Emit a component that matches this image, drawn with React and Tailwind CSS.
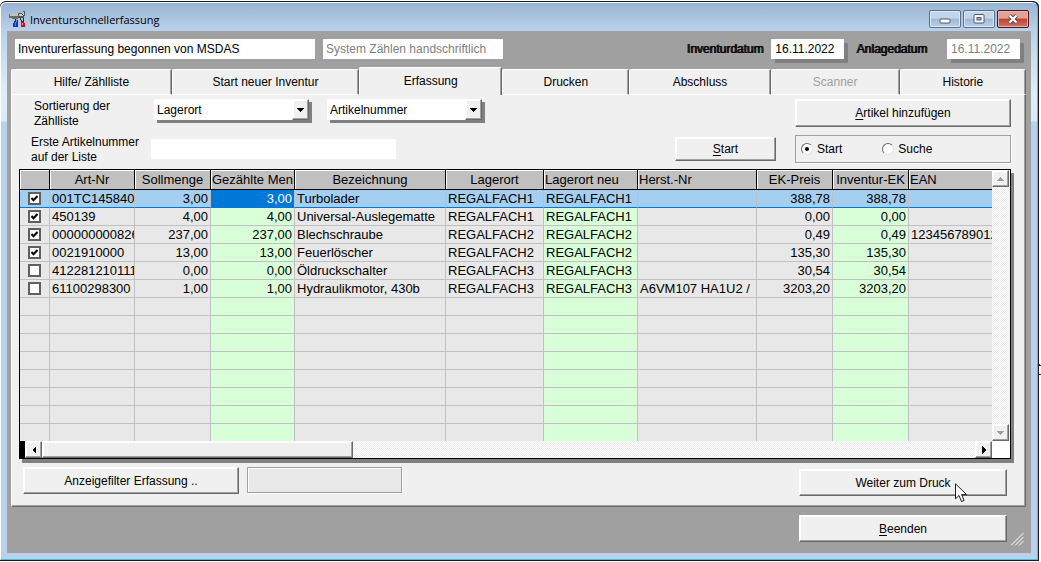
import React, { useState } from 'react';

const TABS = [
  { id: 'hilfe', label: 'Hilfe/ Zählliste', grow: 'flex-[161]' },
  { id: 'neu', label: 'Start neuer Inventur', grow: 'flex-[188]' },
  { id: 'erfassung', label: 'Erfassung', grow: 'flex-[143]' },
  { id: 'drucken', label: 'Drucken', grow: 'flex-[127]' },
  { id: 'abschluss', label: 'Abschluss', grow: 'flex-[141]' },
  { id: 'scanner', label: 'Scanner', grow: 'flex-[129]', disabled: true },
  { id: 'historie', label: 'Historie', grow: 'flex-[126]' },
];

const COLUMNS = [
  { key: 'artNr', label: 'Art-Nr', width: 'w-[85px]' },
  { key: 'soll', label: 'Sollmenge', width: 'w-[76px]', right: true },
  { key: 'menge', label: 'Gezählte Men', width: 'w-[84px]', right: true, edit: true, headLeft: true },
  { key: 'name', label: 'Bezeichnung', width: 'w-[151px]' },
  { key: 'lager', label: 'Lagerort', width: 'w-[98px]' },
  { key: 'lagerNeu', label: 'Lagerort neu', width: 'w-[94px]', edit: true, headLeft: true },
  { key: 'herst', label: 'Herst.-Nr', width: 'w-[119px]', headLeft: true },
  { key: 'ek', label: 'EK-Preis', width: 'w-[76px]', right: true },
  { key: 'invEk', label: 'Inventur-EK', width: 'w-[76px]', right: true, edit: true },
  { key: 'ean', label: 'EAN', width: '', headLeft: true },
];

const ROWS = [
  { counted: true, artNr: '001TC1458400', soll: '3,00', menge: '3,00', name: 'Turbolader', lager: 'REGALFACH1', lagerNeu: 'REGALFACH1', ek: '388,78', invEk: '388,78' },
  { counted: true, artNr: '450139', soll: '4,00', menge: '4,00', name: 'Universal-Auslegematte', lager: 'REGALFACH1', lagerNeu: 'REGALFACH1', ek: '0,00', invEk: '0,00' },
  { counted: true, artNr: '000000000826', soll: '237,00', menge: '237,00', name: 'Blechschraube', lager: 'REGALFACH2', lagerNeu: 'REGALFACH2', ek: '0,49', invEk: '0,49', ean: '123456789012' },
  { counted: true, artNr: '0021910000', soll: '13,00', menge: '13,00', name: 'Feuerlöscher', lager: 'REGALFACH2', lagerNeu: 'REGALFACH2', ek: '135,30', invEk: '135,30' },
  { counted: false, artNr: '412281210111', soll: '0,00', menge: '0,00', name: 'Öldruckschalter', lager: 'REGALFACH3', lagerNeu: 'REGALFACH3', ek: '30,54', invEk: '30,54' },
  { counted: false, artNr: '61100298300', soll: '1,00', menge: '1,00', name: 'Hydraulikmotor, 430b', lager: 'REGALFACH3', lagerNeu: 'REGALFACH3', herst: 'A6VM107 HA1U2 /', ek: '3203,20', invEk: '3203,20' },
];

const EMPTY_ROWS = 8;

const RAISED = 'border border-t-white border-l-white border-r-[#696969] border-b-[#696969] bg-[#f0f0f0] shadow-[inset_-1px_-1px_0_#a0a0a0,inset_1px_1px_0_#fff]';

const DITHER = 'bg-[repeating-conic-gradient(#fff_0_25%,#ececec_0_50%)] bg-[length:2px_2px]';

const Arrow = ({ points, className = 'text-black' }) => (
  <svg className={className} width="8" height="8" viewBox="0 0 8 8" shapeRendering="crispEdges" aria-hidden="true">
    <polygon points={points} fill="currentColor" />
  </svg>
);

// Hammer and pliers with a blue and a red grip
const AppIcon = () => (
  <svg className="mt-1 shrink-0" width="17" height="16" viewBox="0 0 17 16" shapeRendering="crispEdges" aria-hidden="true">
    <path d="M0 3h9v5H3V7H0z" fill="#6a6a6a" />
    <path d="M1 3h8v2H1z" fill="#c2c2c2" />
    <path d="M9 2h4v1h1V0h2v5h-1v2H9z" fill="#555" />
    <path d="M10 3h3v1h1V1h1v3h-1v1h-4z" fill="#c8c8c8" />
    <path d="M6 8h2v1h1v2H5v-1h1z" fill="#2b2b2b" />
    <path d="M7 8h1v3H7z" fill="#999" />
    <path d="M11 7h4v4h-3V9h-1z" fill="#2b2b2b" />
    <path d="M12 7h2v3h-1z" fill="#bbb" />
    <path d="M5 11h4v5H4v-4h1z" fill="#0a35c8" />
    <path d="M6 11h1v4H6z" fill="#4f86ff" />
    <path d="M12 11h3v1h1v4h-4z" fill="#e0081c" />
    <path d="M13 12h1v2h-1z" fill="#ff8a8a" />
  </svg>
);

const CaptionButton = ({ label, close, children }) => (
  <button
    type="button"
    aria-label={label}
    className={`flex h-[18px] w-8 items-center justify-center rounded-xs border ${
      close
        ? 'border-[#4a1620] bg-[linear-gradient(#e2a196_0_45%,#c1402c_50%,#cf7363)] shadow-[inset_0_0_0_1px_#e8b6ac]'
        : 'border-[#5b6f8c] bg-[linear-gradient(#c3d5e8_0_45%,#9fb9d5_50%,#b9d0e8)] shadow-[inset_0_0_0_1px_#dbe8f5]'
    }`}
  >
    {children}
  </button>
);

const PushButton = ({ accessKey, children, className }) => (
  <button type="button" className={`${RAISED} text-center ${className}`}>
    {accessKey && <span className="underline underline-offset-2">{accessKey}</span>}
    {children}
  </button>
);

const Combo = ({ label, value, options, className }) => (
  <div className={`relative h-[21px] bg-white shadow-[3px_3px_0_#808080] ${className}`}>
    <select
      aria-label={label}
      defaultValue={value}
      className="h-full w-full appearance-none bg-white pr-5 pl-[3px] outline-none"
    >
      {options.map((o) => <option key={o}>{o}</option>)}
    </select>
    <span className={`pointer-events-none absolute inset-y-0 right-0 flex w-[17px] items-center justify-center ${RAISED}`}>
      <Arrow points="0,2 7,2 4,6 3,6" />
    </span>
  </div>
);

const CheckBox = ({ checked, onChange, label }) => (
  <span className="grid place-items-center">
    <input
      type="checkbox"
      aria-label={label}
      checked={checked}
      onChange={onChange}
      className="peer col-start-1 row-start-1 size-[13px] appearance-none border-2 border-[#606060] bg-white"
    />
    <svg className="pointer-events-none invisible col-start-1 row-start-1 peer-checked:visible" width="9" height="9" viewBox="0 0 9 9" aria-hidden="true">
      <path d="M1.5 4l2 2.2 4-4.2" fill="none" stroke="#000" strokeWidth="2" />
    </svg>
  </span>
);

const Radio = ({ label, checked, onChange }) => (
  <label className="flex items-center gap-1">
    <span className="grid place-items-center">
      <input
        type="radio"
        name="modus"
        checked={checked}
        onChange={onChange}
        className="peer col-start-1 row-start-1 size-3 appearance-none rounded-full border border-t-[#696969] border-r-[#e3e3e3] border-b-[#e3e3e3] border-l-[#696969] bg-white"
      />
      <span className="pointer-events-none invisible col-start-1 row-start-1 size-1 rounded-full bg-black peer-checked:visible"></span>
    </span>
    {label}
  </label>
);

const StockTable = () => {
  const [rows, setRows] = useState(ROWS);

  const toggle = (index) => {
    setRows(rows.map((r, i) => (i === index ? { ...r, counted: !r.counted } : r)));
  };

  const cellColor = (rowIndex, col) => {
    if (rowIndex === 0) {
      return col.key === 'menge'
        ? 'bg-[#0078d7] text-white border-b-[#0078d7]'
        : 'bg-[#a5cff0] border-b-[#0078d7]';
    }
    return col.edit ? 'bg-[#d9ffd9] border-b-[#c0c0c0]' : 'bg-[#e8e8e8] border-b-[#c0c0c0]';
  };

  return (
    <div className="border border-black bg-white shadow-[3px_4px_0_#808080]">
      <div className="flex">
        <div className="min-w-0 flex-1">
          <table className="w-full table-fixed border-separate border-spacing-0 text-[13px] leading-4">
            <colgroup>
              <col className="w-[30px]" />
              {COLUMNS.map((c) => <col key={c.key} className={c.width} />)}
            </colgroup>
            <thead>
              <tr className="h-5">
                <th aria-label="Gezählt" className="border-r border-b border-black bg-[#c0c0c0] p-0 shadow-[inset_1px_1px_0_#fff]"></th>
                {COLUMNS.map((c) => (
                  <th
                    key={c.key}
                    className={`overflow-hidden border-b border-black bg-[#c0c0c0] p-0 font-normal whitespace-nowrap shadow-[inset_1px_1px_0_#fff] ${
                      c.headLeft ? 'pl-px text-left' : 'text-center'
                    } ${c.key === 'ean' ? '' : 'border-r'}`}
                  >
                    {c.label}
                  </th>
                ))}
              </tr>
            </thead>
            <tbody>
              {rows.map((row, i) => (
                <tr key={row.artNr} className="h-[18px]">
                  <td className={`border-r border-b border-r-[#c0c0c0] p-0 ${i === 0 ? 'border-b-[#0078d7] bg-[#a5cff0]' : 'border-b-[#c0c0c0] bg-[#e8e8e8]'}`}>
                    <CheckBox checked={row.counted} onChange={() => toggle(i)} label={row.artNr} />
                  </td>
                  {COLUMNS.map((c) => (
                    <td
                      key={c.key}
                      className={`overflow-hidden border-b py-0 whitespace-nowrap ${c.right ? 'pr-0.5 pl-0 text-right' : 'pr-0 pl-0.5'} ${
                        c.key === 'ean' ? '' : 'border-r border-r-[#c0c0c0]'
                      } ${cellColor(i, c)}`}
                    >
                      {row[c.key]}
                    </td>
                  ))}
                </tr>
              ))}
              {Array.from({ length: EMPTY_ROWS }, (_, i) => (
                <tr key={i} className={i === EMPTY_ROWS - 1 ? 'h-[17px]' : 'h-[18px]'}>
                  <td className={`border-r border-[#c0c0c0] bg-[#e8e8e8] p-0 ${i === EMPTY_ROWS - 1 ? '' : 'border-b'}`}></td>
                  {COLUMNS.map((c) => (
                    <td
                      key={c.key}
                      className={`border-[#c0c0c0] p-0 ${c.edit ? 'bg-[#d9ffd9]' : 'bg-[#e8e8e8]'} ${
                        c.key === 'ean' ? '' : 'border-r'
                      } ${i === EMPTY_ROWS - 1 ? '' : 'border-b'}`}
                    ></td>
                  ))}
                </tr>
              ))}
            </tbody>
          </table>
        </div>
        <div className={`flex w-[18px] flex-col justify-between pr-px ${DITHER}`}>
          <button type="button" aria-label="Nach oben" className={`flex h-[17px] items-center justify-center ${RAISED}`}>
            <Arrow points="0,6 7,6 4,2 3,2" className="text-[#a0a0a0]" />
          </button>
          <button type="button" aria-label="Nach unten" className={`flex h-[17px] items-center justify-center ${RAISED}`}>
            <Arrow points="0,2 7,2 4,6 3,6" className="text-[#a0a0a0]" />
          </button>
        </div>
      </div>
      <div className="flex h-[17px]">
        <div className="w-[5px] bg-black"></div>
        <button type="button" aria-label="Nach links" className={`flex w-[17px] items-center justify-center ${RAISED}`}>
          <Arrow points="6,0 6,8 2,4" />
        </button>
        <div className={`flex-1 ${DITHER}`}>
          <div className={`h-full w-1/3 ${RAISED}`}></div>
        </div>
        <button type="button" aria-label="Nach rechts" className={`flex w-[17px] items-center justify-center ${RAISED}`}>
          <Arrow points="2,0 2,8 6,4" />
        </button>
        <div className="w-[18px] bg-white"></div>
      </div>
    </div>
  );
};

const App = () => {
  const [tab, setTab] = useState('erfassung');
  const [mode, setMode] = useState('start');

  return (
    <div className="relative overflow-hidden bg-white pt-px pr-0.5 font-['Liberation_Sans',Arial,sans-serif] text-xs text-black">
      {/* Bit of the window behind, at the right edge */}
      <svg className="absolute top-[364px] right-0" width="2" height="12" viewBox="0 0 2 12" shapeRendering="crispEdges" aria-hidden="true">
        <path d="M0 0h1v1h1v1H0zM0 10h2v1H0z" fill="#222" />
      </svg>
      <div className="rounded-t-md border-t border-r border-b border-[#1c1c24] bg-black">
        <div className="rounded-t-md border-t border-r border-b border-l border-t-white border-r-[#3fc4e0] border-b-[#3fc4e0] border-l-white bg-[linear-gradient(#9ab5d3_0,#b9d1ea_28px,#e2edf9_90px,#dce9f7_118px,#b9d1ea_119px)] pb-1.5">
          {/* Title bar */}
          <header className="flex h-7 items-center pr-2 pl-2">
            <AppIcon />
            <h1 className="flex-1 pt-1.5 pl-1 font-['Open_Sans','Noto_Sans',sans-serif] text-[11px] leading-4">
              Inventurschnellerfassung
            </h1>
            <div className="flex gap-0.5 pt-1">
              <CaptionButton label="Minimieren">
                <svg width="12" height="10" viewBox="0 0 12 10" aria-hidden="true">
                  <rect x="1" y="5" width="10" height="4" rx="1" fill="#fff" stroke="#4d5768" />
                </svg>
              </CaptionButton>
              <CaptionButton label="Wiederherstellen">
                <svg width="12" height="10" viewBox="0 0 12 10" aria-hidden="true">
                  <rect x="1" y="0.5" width="10" height="8.5" rx="1" fill="#fff" stroke="#4d5768" />
                  <rect x="4" y="3.5" width="4" height="2.5" fill="#9fb9d5" stroke="#4d5768" />
                </svg>
              </CaptionButton>
              <CaptionButton label="Schließen" close>
                <svg width="12" height="10" viewBox="0 0 12 10" aria-hidden="true">
                  <path d="M2.5 1.5l7 7M9.5 1.5l-7 7" stroke="#4d4452" strokeWidth="4" />
                  <path d="M2.5 1.5l7 7M9.5 1.5l-7 7" stroke="#fff" strokeWidth="2.2" />
                </svg>
              </CaptionButton>
            </div>
          </header>

          <main className="mr-1.5 ml-1.5 bg-[#a0a0a0] pt-2">
            {/* Status fields */}
            <div className="flex h-5 items-center pr-[11px] pl-2">
              <input aria-label="Status" readOnly defaultValue="Inventurerfassung begonnen von MSDAS" className="h-5 w-[300px] bg-white px-[3px]" />
              <input aria-label="System" disabled defaultValue="System Zählen handschriftlich" className="ml-2 h-5 w-[180px] bg-white px-[3px] text-[#808080]" />
              <label htmlFor="inventurdatum" className="ml-auto [text-shadow:1px_0_0_#000]">Inventurdatum</label>
              <input id="inventurdatum" defaultValue="16.11.2022" className="ml-2 h-5 w-[73px] bg-white px-1 shadow-[4px_4px_0_#808080]" />
              <label htmlFor="anlagedatum" className="ml-3 [text-shadow:1px_0_0_#000]">Anlagedatum</label>
              <input id="anlagedatum" disabled defaultValue="16.11.2022" className="ml-5 h-5 w-[73px] bg-white px-1 text-[#808080] shadow-[4px_4px_0_#808080]" />
            </div>

            <div className="mt-2 mr-[5px] ml-1">
              {/* Tabs */}
              <div role="tablist" className="flex items-end">
                {TABS.map((t) => (
                  <button
                    key={t.id}
                    type="button"
                    role="tab"
                    aria-selected={tab === t.id}
                    disabled={t.disabled}
                    onClick={() => setTab(t.id)}
                    className={`min-w-0 rounded-t-xs border-t border-r border-l border-t-white border-r-[#696969] border-l-white bg-[#f0f0f0] shadow-[inset_-1px_0_0_#a0a0a0] ${t.grow} ${
                      tab === t.id ? 'h-7 pb-px' : 'h-[26px] border-b border-b-white'
                    } ${t.disabled ? 'text-[#a0a0a0]' : ''}`}
                  >
                    {t.label}
                  </button>
                ))}
              </div>

              <section className="border-r border-b border-l border-r-[#696969] border-b-[#696969] border-l-white bg-[#f0f0f0] pt-1 pr-3.5 pb-2.5 pl-[7px] shadow-[inset_-1px_-1px_0_#a0a0a0]">
                <div className="flex">
                  <div className="flex-1">
                    <div className="flex items-start">
                      <p className="w-[135px] pl-[15px] leading-[15px]">
                        Sortierung der
                        <br />
                        Zählliste
                      </p>
                      <Combo label="Sortierung 1" value="Lagerort" options={['Lagerort', 'Artikelnummer']} className="w-[155px]" />
                      <Combo label="Sortierung 2" value="Artikelnummer" options={['Artikelnummer', 'Lagerort']} className="ml-[18px] w-[155px]" />
                    </div>
                    <div className="mt-1.5 flex items-start">
                      <label htmlFor="erste" className="w-[132px] pl-3 leading-[15px]">
                        Erste Artikelnummer
                        <br />
                        auf der Liste
                      </label>
                      <input id="erste" className="mt-1 h-5 w-[245px] bg-white px-[3px]" />
                      <PushButton accessKey="S" className="mt-0.5 mr-[19px] ml-auto h-6 w-[101px]">tart</PushButton>
                    </div>
                  </div>
                  <div className="w-[216px]">
                    <PushButton accessKey="A" className="h-7 w-full">rtikel hinzufügen</PushButton>
                    <div role="radiogroup" aria-label="Modus" className="mt-2 flex h-7 gap-10 border border-[#a0a0a0] pl-[5px] shadow-[1px_1px_0_#fff]">
                      <Radio label="Start" checked={mode === 'start'} onChange={() => setMode('start')} />
                      <Radio label="Suche" checked={mode === 'suche'} onChange={() => setMode('suche')} />
                    </div>
                  </div>
                </div>

                <div className="mt-1">
                  <StockTable />
                </div>

                <div className="mt-2 flex items-start pr-1 pl-1">
                  <PushButton className="h-[27px] w-[216px]">Anzeigefilter Erfassung ..</PushButton>
                  <input aria-label="Filter" disabled className="ml-2 h-[26px] w-[155px] border border-[#a0a0a0] bg-[#e8e8e8] shadow-[1px_1px_0_#fff,inset_1px_1px_0_#fff]" />
                  <div className="relative mt-0.5 ml-auto">
                    <PushButton className="h-[27px] w-[208px]">Weiter zum Druck</PushButton>
                    {/* Mouse pointer */}
                    <svg className="pointer-events-none absolute top-3.5 left-39" width="13" height="20" viewBox="0 0 13 20" aria-hidden="true">
                      <path d="M.5.8v15l3.5-3.3 2.5 6 2.6-1.1-2.5-5.8h5z" fill="#fff" stroke="#1b1b2b" />
                    </svg>
                  </div>
                </div>
              </section>
            </div>

            <footer className="flex items-end justify-end pt-2 pr-[7px] pb-[11px]">
              <PushButton accessKey="B" className="h-[27px] w-[208px]">eenden</PushButton>
              <svg className="-mb-1 ml-1" width="13" height="13" viewBox="0 0 13 13" aria-hidden="true">
                <path d="M0 12.5L12.5 0M4 12.5l8.5-8.5M8 12.5l4.5-4.5" stroke="#fff" />
              </svg>
            </footer>
          </main>
        </div>
      </div>
    </div>
  );
};

export default App;
